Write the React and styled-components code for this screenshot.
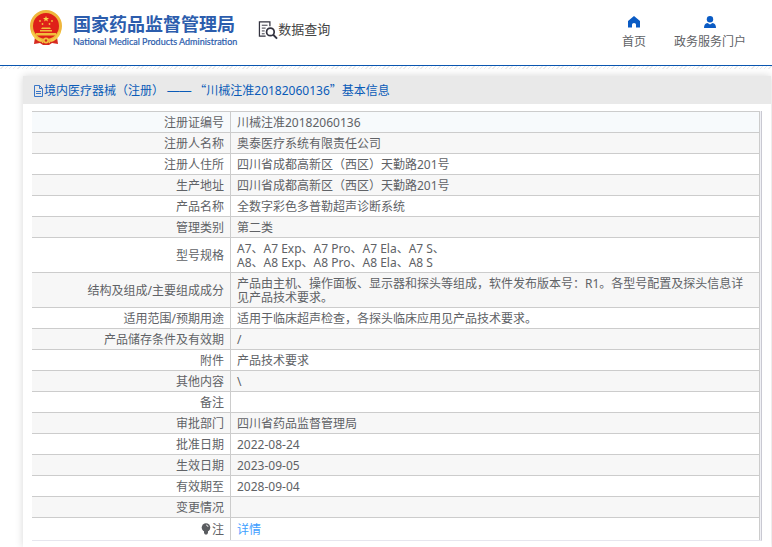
import React from "react";
import styled, { createGlobalStyle } from "styled-components";

const GlobalStyle = createGlobalStyle`
  * { box-sizing: border-box; }
  body {
    margin: 0;
    background: #fff;
    color: #606266;
    font: 12px/14px "Noto Sans", "Noto Sans CJK SC", sans-serif;
  }
  a { color: inherit; text-decoration: none; }
`;

const Page = styled.div`
  display: flex;
  flex-direction: column;
  min-height: 100vh;
`;

const Header = styled.header`
  display: flex;
  align-items: flex-start;
  height: 66px;
  padding: 0 26px 0 29px;
  border-bottom: 1px solid #0a56b0;
`;

const Brand = styled.a`
  display: flex;
  gap: 10px;
  padding-top: 10px;
  color: #2c5dad;
`;

const BrandText = styled.span`
  display: flex;
  flex-direction: column;
  white-space: nowrap;
`;

const BrandName = styled.strong`
  font: bold 18px/27px "Noto Sans CJK SC", sans-serif;
`;

const BrandEnglish = styled.span`
  font: 9px/10px Lato, sans-serif;
  -webkit-text-stroke: 0.2px currentColor;
`;

const Section = styled.a`
  display: flex;
  align-items: center;
  margin: 18px 0 0 21px;
  color: #444;
  font: 13px/22px "Noto Sans CJK SC", sans-serif;
  white-space: nowrap;

  svg { margin-top: 2px; }
`;

const Nav = styled.nav`
  display: flex;
  gap: 28px;
  margin-left: auto;
  padding-top: 16px;
`;

const NavLink = styled.a`
  display: flex;
  flex-direction: column;
  align-items: center;
  gap: 7px;
  line-height: 14px;
  white-space: nowrap;

  svg { fill: #0a5bc4; }
`;

const Hatch = styled.div`
  height: 3px;
  margin-bottom: 7px;
  background: repeating-linear-gradient(135deg, #fff 0 2px, #ececec 2px 3px);
`;

const Card = styled.main`
  flex: 1;
  margin: 0 1px 0 23px;
  box-shadow: 0 0 8px rgba(0, 0, 0, 0.16);
  background: #fff;
`;

const CardTitle = styled.h1`
  display: flex;
  align-items: center;
  height: 28px;
  margin: 0;
  padding: 1px 0 0 10px;
  background: #e9e9e9;
  color: #0a5bb8;
  font-size: 12px;
  font-weight: 400;
  white-space: pre;
`;

const Dash = styled.span`
  font-family: "Liberation Sans", sans-serif;
`;

const WideMark = styled.span`
  font-family: "Noto Sans CJK SC", sans-serif;
`;

const TableFrame = styled.div`
  margin: 7px 9px 0;
  padding-right: 1px;
  border-right: 1px solid #c9c9d2;
  border-bottom: 1px solid #e6e6ee;
  background: #f0f0f5;
`;

const Table = styled.table`
  width: 100%;
  border-collapse: separate;
  border-spacing: 0;
  border-right: 1px solid #ccc;
  background: #fff;
`;

const Row = styled.tr`
  height: ${({ $last }) => ($last ? 23 : 21)}px;
  background: ${({ $tone }) => $tone};
`;

const Label = styled.th`
  width: 199px;
  padding: 4px 6px 2px;
  border-top: 1px solid #ccc;
  border-right: 1px solid #ccc;
  font-weight: 400;
  text-align: right;

  svg { margin-right: 1px; vertical-align: -1px; }
`;

const Value = styled.td`
  padding: 4px 7px 2px 6px;
  border-top: 1px solid #ccc;
  white-space: pre-line;
`;

const DetailLink = styled.a`
  color: #409eff;
`;

const rows = [
  ["注册证编号", "川械注准20182060136"],
  ["注册人名称", "奥泰医疗系统有限责任公司"],
  ["注册人住所", "四川省成都高新区（西区）天勤路201号"],
  ["生产地址", "四川省成都高新区（西区）天勤路201号"],
  ["产品名称", "全数字彩色多普勒超声诊断系统"],
  ["管理类别", "第二类"],
  ["型号规格", "A7、A7 Exp、A7 Pro、A7 Ela、A7 S、\nA8、A8 Exp、A8 Pro、A8 Ela、A8 S"],
  ["结构及组成/主要组成成分", "产品由主机、操作面板、显示器和探头等组成，软件发布版本号：R1。各型号配置及探头信息详见产品技术要求。"],
  ["适用范围/预期用途", "适用于临床超声检查，各探头临床应用见产品技术要求。"],
  ["产品储存条件及有效期", "/"],
  ["附件", "产品技术要求"],
  ["其他内容", "\\"],
  ["备注", ""],
  ["审批部门", "四川省药品监督管理局"],
  ["批准日期", "2022-08-24"],
  ["生效日期", "2023-09-05"],
  ["有效期至", "2028-09-04"],
  ["变更情况", ""],
];

const rowTone = (index) => {
  if (index === 0) return "#f7fafc";
  return index % 2 ? "#f7f7f7" : "#fff";
};

const Emblem = () => (
  <svg width="34" height="37" viewBox="0 0 34 37" aria-hidden="true">
    <path d="M6 27 5 34l6-1 3 2h6l3-2 6 1-1-7z" fill="#d6291f" />
    <circle cx="17" cy="16" r="14.5" fill="#df2019" stroke="#efb63c" strokeWidth="3" />
    <path d="M3 22q3 7 9 9m19-9q-3 7-9 9" fill="none" stroke="#f6cd4a" strokeWidth="2" />
    <path d="m17 6 .8 2h2.200l-1.700 1.400.6 2.200-1.900-1.300-1.900 1.300.6-2.200L14 8h2.200z" fill="#f8d34b" />
    <g fill="#f2bd3c">
      <circle cx="11" cy="11" r="0.9" />
      <circle cx="23" cy="11" r="0.9" />
      <circle cx="13.500" cy="14" r="0.9" />
      <circle cx="20.500" cy="14" r="0.9" />
      <path d="m12 19 1-1.500h8l1 1.500zM11 20h12v1.500H11zM7 23h20v2.500H7z" />
      <circle cx="17" cy="30.500" r="3" />
    </g>
    <path d="M7 28q5 1 7 5m13-5q-5 1-7 5" fill="none" stroke="#f5c944" strokeWidth="1.200" />
    <circle cx="17" cy="30.500" r="1.200" fill="#d6291f" />
  </svg>
);

const SearchDocument = () => (
  <svg width="20" height="20" viewBox="0 0 21 20" fill="none" stroke="#33333f" aria-hidden="true">
    <path d="M12.500 6V1.500h-11v15H8" strokeWidth="1.300" />
    <path d="M4 5h6M4 8h4M4 11h3M4 14h3" />
    <circle cx="13" cy="12" r="4" strokeWidth="1.800" />
    <path d="m16 15 4 4" strokeWidth="2" />
  </svg>
);

const HomeIcon = () => (
  <svg width="12" height="12" viewBox="0 0 12 12" aria-hidden="true">
    <path d="M6 0 0 5v6.500h4V8.500q0-1.500 2-1.500t2 1.500v3h4V5z" />
  </svg>
);

const PersonIcon = () => (
  <svg width="12" height="12" viewBox="0 0 12 12" aria-hidden="true">
    <circle cx="6" cy="3.200" r="3.200" />
    <path d="M0 12q0-4.500 3.500-5L6 8.500 8.500 7Q12 7.500 12 12z" />
  </svg>
);

const DocumentIcon = () => (
  <svg width="11" height="12" viewBox="0 0 11 12" fill="none" stroke="#3b77c7" aria-hidden="true">
    <path d="M1.500.5h5l3 3v8h-8zM6.500.5v3h3M3 6.500h5M3 8.500h5" />
  </svg>
);

const BulbIcon = () => (
  <svg width="10" height="12" viewBox="0 0 10 12" aria-hidden="true">
    <circle cx="5" cy="4.500" r="4.300" fill="#5a5c60" />
    <path d="M3 8h4v2l-1 1.500H4L3 10z" fill="#5a5c60" />
    <path d="M5 2q2 0 2 2" fill="none" stroke="#ddd" />
  </svg>
);

export default function App() {
  return (
    <Page>
      <GlobalStyle />
      <Header>
        <Brand href="#">
          <Emblem />
          <BrandText>
            <BrandName>国家药品监督管理局</BrandName>
            <BrandEnglish>National Medical Products Administration</BrandEnglish>
          </BrandText>
        </Brand>
        <Section href="#">
          <SearchDocument />
          数据查询
        </Section>
        <Nav>
          <NavLink href="#"><HomeIcon />首页</NavLink>
          <NavLink href="#"><PersonIcon />政务服务门户</NavLink>
        </Nav>
      </Header>
      <Hatch />
      <Card>
        <CardTitle>
          <DocumentIcon />
          <span>
            境内医疗器械（注册） <Dash>——</Dash> <WideMark lang="zh-CN">“</WideMark>川械注准20182060136<WideMark lang="zh-CN">”</WideMark>基本信息
          </span>
        </CardTitle>
        <TableFrame>
          <Table>
            <tbody>
              {rows.map(([label, value], index) => (
                <Row key={label} $tone={rowTone(index)}>
                  <Label scope="row">{label}</Label>
                  <Value>{value}</Value>
                </Row>
              ))}
              <Row $last $tone="#fff">
                <Label scope="row"><BulbIcon />注</Label>
                <Value><DetailLink href="#">详情</DetailLink></Value>
              </Row>
            </tbody>
          </Table>
        </TableFrame>
      </Card>
    </Page>
  );
}
